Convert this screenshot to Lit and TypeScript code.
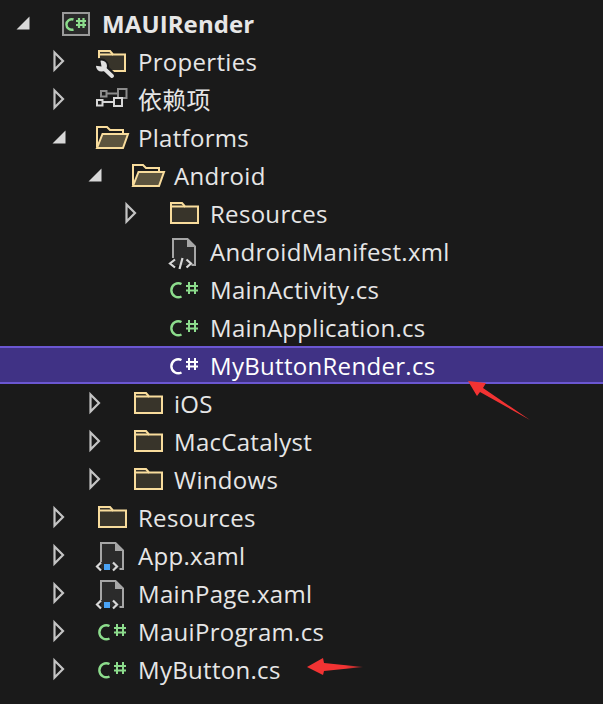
import { LitElement, html, css, svg } from "lit";
import { customElement } from "lit/decorators.js";

type Kind = "project" | "props" | "deps" | "open" | "folder" | "xml" | "xaml" | "cs";
interface Row { level: number; kind: Kind; exp: "open" | "closed" | "none"; label: string; bold?: boolean; sel?: boolean; }

const ROWS: Row[] = [
  { level: 0, kind: "project", exp: "open", label: "MAUIRender", bold: true },
  { level: 1, kind: "props", exp: "closed", label: "Properties" },
  { level: 1, kind: "deps", exp: "closed", label: "依赖项" },
  { level: 1, kind: "open", exp: "open", label: "Platforms" },
  { level: 2, kind: "open", exp: "open", label: "Android" },
  { level: 3, kind: "folder", exp: "closed", label: "Resources" },
  { level: 3, kind: "xml", exp: "none", label: "AndroidManifest.xml" },
  { level: 3, kind: "cs", exp: "none", label: "MainActivity.cs" },
  { level: 3, kind: "cs", exp: "none", label: "MainApplication.cs" },
  { level: 3, kind: "cs", exp: "none", label: "MyButtonRender.cs", sel: true },
  { level: 2, kind: "folder", exp: "closed", label: "iOS" },
  { level: 2, kind: "folder", exp: "closed", label: "MacCatalyst" },
  { level: 2, kind: "folder", exp: "closed", label: "Windows" },
  { level: 1, kind: "folder", exp: "closed", label: "Resources" },
  { level: 1, kind: "xaml", exp: "closed", label: "App.xaml" },
  { level: 1, kind: "xaml", exp: "closed", label: "MainPage.xaml" },
  { level: 1, kind: "cs", exp: "closed", label: "MauiProgram.cs" },
  { level: 1, kind: "cs", exp: "closed", label: "MyButton.cs" },
];

const page = svg`<path class="page-fill" d="M6 5h14l8 8v18H6z"/>
  <path class="page" d="M6 24V5h14.500l7.500 7.500V31h-3.500"/>
  <path class="page-fold" d="M20 5l8.500 8H20z"/>`;

const ICONS: Record<Kind, unknown> = {
  project: svg`<rect x="4" y="7" width="26" height="22" class="proj"/>
    <path class="cs-s" stroke-width="2.400" d="M14.500 13.500a5.300 5.300 0 1 0 0 10"/>
    <path class="cs-s" stroke-width="2.200" d="M20 12v10M24.500 12v10M17 15h10M17 19h10"/>`,
  props: svg`<path class="fold-bg" d="M3 27V6h12l3 3.500h13V27z"/>
    <path class="fold-line" d="M4 15V7h11l3 3.500h12V27H14"/>
    <path class="fold-line" d="M4 10.500h14"/>
    <g class="wrench">
      <circle class="halo" cx="6.500" cy="22" r="7"/>
      <path class="halo" d="M9 24l8.500 8" stroke-width="8"/>
      <circle class="head" cx="6.500" cy="22" r="5.500"/>
      <path class="notch" d="M6.500 22.500L-1 21.500 0.500 14.500 5 14z"/>
      <path class="shaft" d="M9 24.500l8 7.500"/>
    </g>`,
  deps: svg`<rect class="d1" x="6" y="9" width="5.500" height="5.500"/>
    <rect class="d1" x="23" y="7" width="8.500" height="9"/>
    <path class="d1" d="M12 11.500h11"/>
    <path class="d2" d="M8 20h11"/>
    <rect class="d2" x="19" y="16" width="8" height="8"/>
    <rect class="d2" x="2" y="18" width="5.500" height="5.500"/>`,
  open: svg`<path class="fold-line" d="M2 27V7h10l3 3h13v4"/>
    <path class="fold-open" d="M7.500 14H33l-5 14H2z"/>`,
  folder: svg`<path class="fold" d="M4 27V7h11l3 3.500h13V27z"/><path class="fold-line" d="M4 10.500h14"/>`,
  xml: svg`${page}<rect x="0" y="24" width="24" height="11" class="clear"/>
    <path class="xml" d="M8 25.500l-5 4 5 4M19.500 25.500l4.500 4-4.500 4M15.500 24l-3 11"/>`,
  xaml: svg`${page}<rect x="0" y="24" width="24" height="11" class="clear"/>
    <rect x="9" y="26" width="6" height="6" fill="#4aa3f5"/><path class="xml" d="M6 24.500l-4 4 4 4M18 24.500l4 4-4 4"/>`,
  cs: svg`<path class="cs-s" stroke-width="2.400" d="M14.500 12a7 7 0 1 0 0 12.500"/>
    <path class="cs-s" stroke-width="2" d="M22 10v12M28 10v12M19 14h12M19 18.500h12"/>`,
};

@customElement("app-root")
export class AppRoot extends LitElement {
  static styles = css`
    :host { display: block; position: relative; height: 704px; overflow: hidden; background: #1a1a1a; padding-top: 4px; box-sizing: border-box; }
    .row { display: flex; align-items: center; height: 38px; box-sizing: border-box; color: #e6e6e6;
      font: 400 24px/36px "Open Sans", "Noto Sans CJK SC", sans-serif; letter-spacing: 0.3px; white-space: nowrap; }
    .row.sel { background: #403285; border-top: 2px solid #6b57d2; border-bottom: 2px solid #6b57d2; color: #fff; }
    .row.bold { font-weight: 700; letter-spacing: 0.1px; }
    .lbl { padding-top: 2px; }
    .exp { width: 36px; height: 34px; flex: none; margin-right: 18px; }
    .ico { width: 34px; height: 34px; flex: none; margin-right: 9px; overflow: visible; }
    .fold { fill: #38342a; stroke: #f8dc9c; stroke-width: 2; }
    .fold-bg { fill: #38342a; }
    .fold-line { fill: none; stroke: #f8dc9c; stroke-width: 2; }
    .fold-open { fill: #5c543e; stroke: #f8dc9c; stroke-width: 2; }
    .halo { fill: #1a1a1a; stroke: #1a1a1a; }
    .head { fill: #e0e0e0; }
    .notch { fill: #1a1a1a; }
    .shaft { fill: none; stroke: #e0e0e0; stroke-width: 4; stroke-linecap: round; }
    .d1 { fill: none; stroke: #8c8c8c; stroke-width: 2; }
    .d2 { fill: #1a1a1a; stroke: #d8d8d8; stroke-width: 2; }
    .proj { fill: #2a2a2a; stroke: #9a9a9a; stroke-width: 2; }
    .page { fill: none; stroke: #a6a6a6; stroke-width: 2; }
    .page-fill { fill: #2b2b2b; }
    .page-fold { fill: #a6a6a6; }
    .clear { fill: #1a1a1a; opacity: 0; }
    .xml { fill: none; stroke: #d8d8d8; stroke-width: 2.200; }
    .cs-s { fill: none; stroke: #8cdc8c; }
    .sel .cs-s { stroke: #fff; }
    .arrows { position: absolute; left: 0; top: 0; pointer-events: none; }
    .hollow { fill: none; stroke: #c4c4c4; stroke-width: 2.200; }
    .solid { fill: #d8d8d8; }
  `;

  private expander(e: Row["exp"]) {
    return html`<svg class="exp" viewBox="0 0 36 34">
      ${e === "open" ? svg`<path class="solid" d="M24.500 10.500v13h-13z"/>` : e === "closed" ? svg`<path class="hollow" d="M13.500 8.500l8.500 8.500-8.500 8.500z"/>` : ""}
    </svg>`;
  }

  render() {
    return html`
      ${ROWS.map(r => html`
        <div class="row ${r.sel ? "sel" : ""} ${r.bold ? "bold" : ""}" style="padding-left:${5 + 36 * r.level}px">
          ${this.expander(r.exp)}
          <svg class="ico" viewBox="0 0 34 34">${ICONS[r.kind]}</svg>
          <span class="lbl">${r.label}</span>
        </div>`)}
      <svg class="arrows" width="603" height="704">
        <defs>
          <linearGradient id="t2" x1="0" y1="0" x2="1" y2="0"><stop offset="0.700" stop-color="#f23333"/><stop offset="1" stop-color="#f23333" stop-opacity="0.500"/></linearGradient>
        </defs>
        <path fill="#f23333" d="M468 381L486 383 483 388 530 420 480 392 477 396z"/>
        <path fill="url(#t2)" d="M307 667L323 658 324 663 363 667 324 671 323 675z"/>
      </svg>
    `;
  }
}
